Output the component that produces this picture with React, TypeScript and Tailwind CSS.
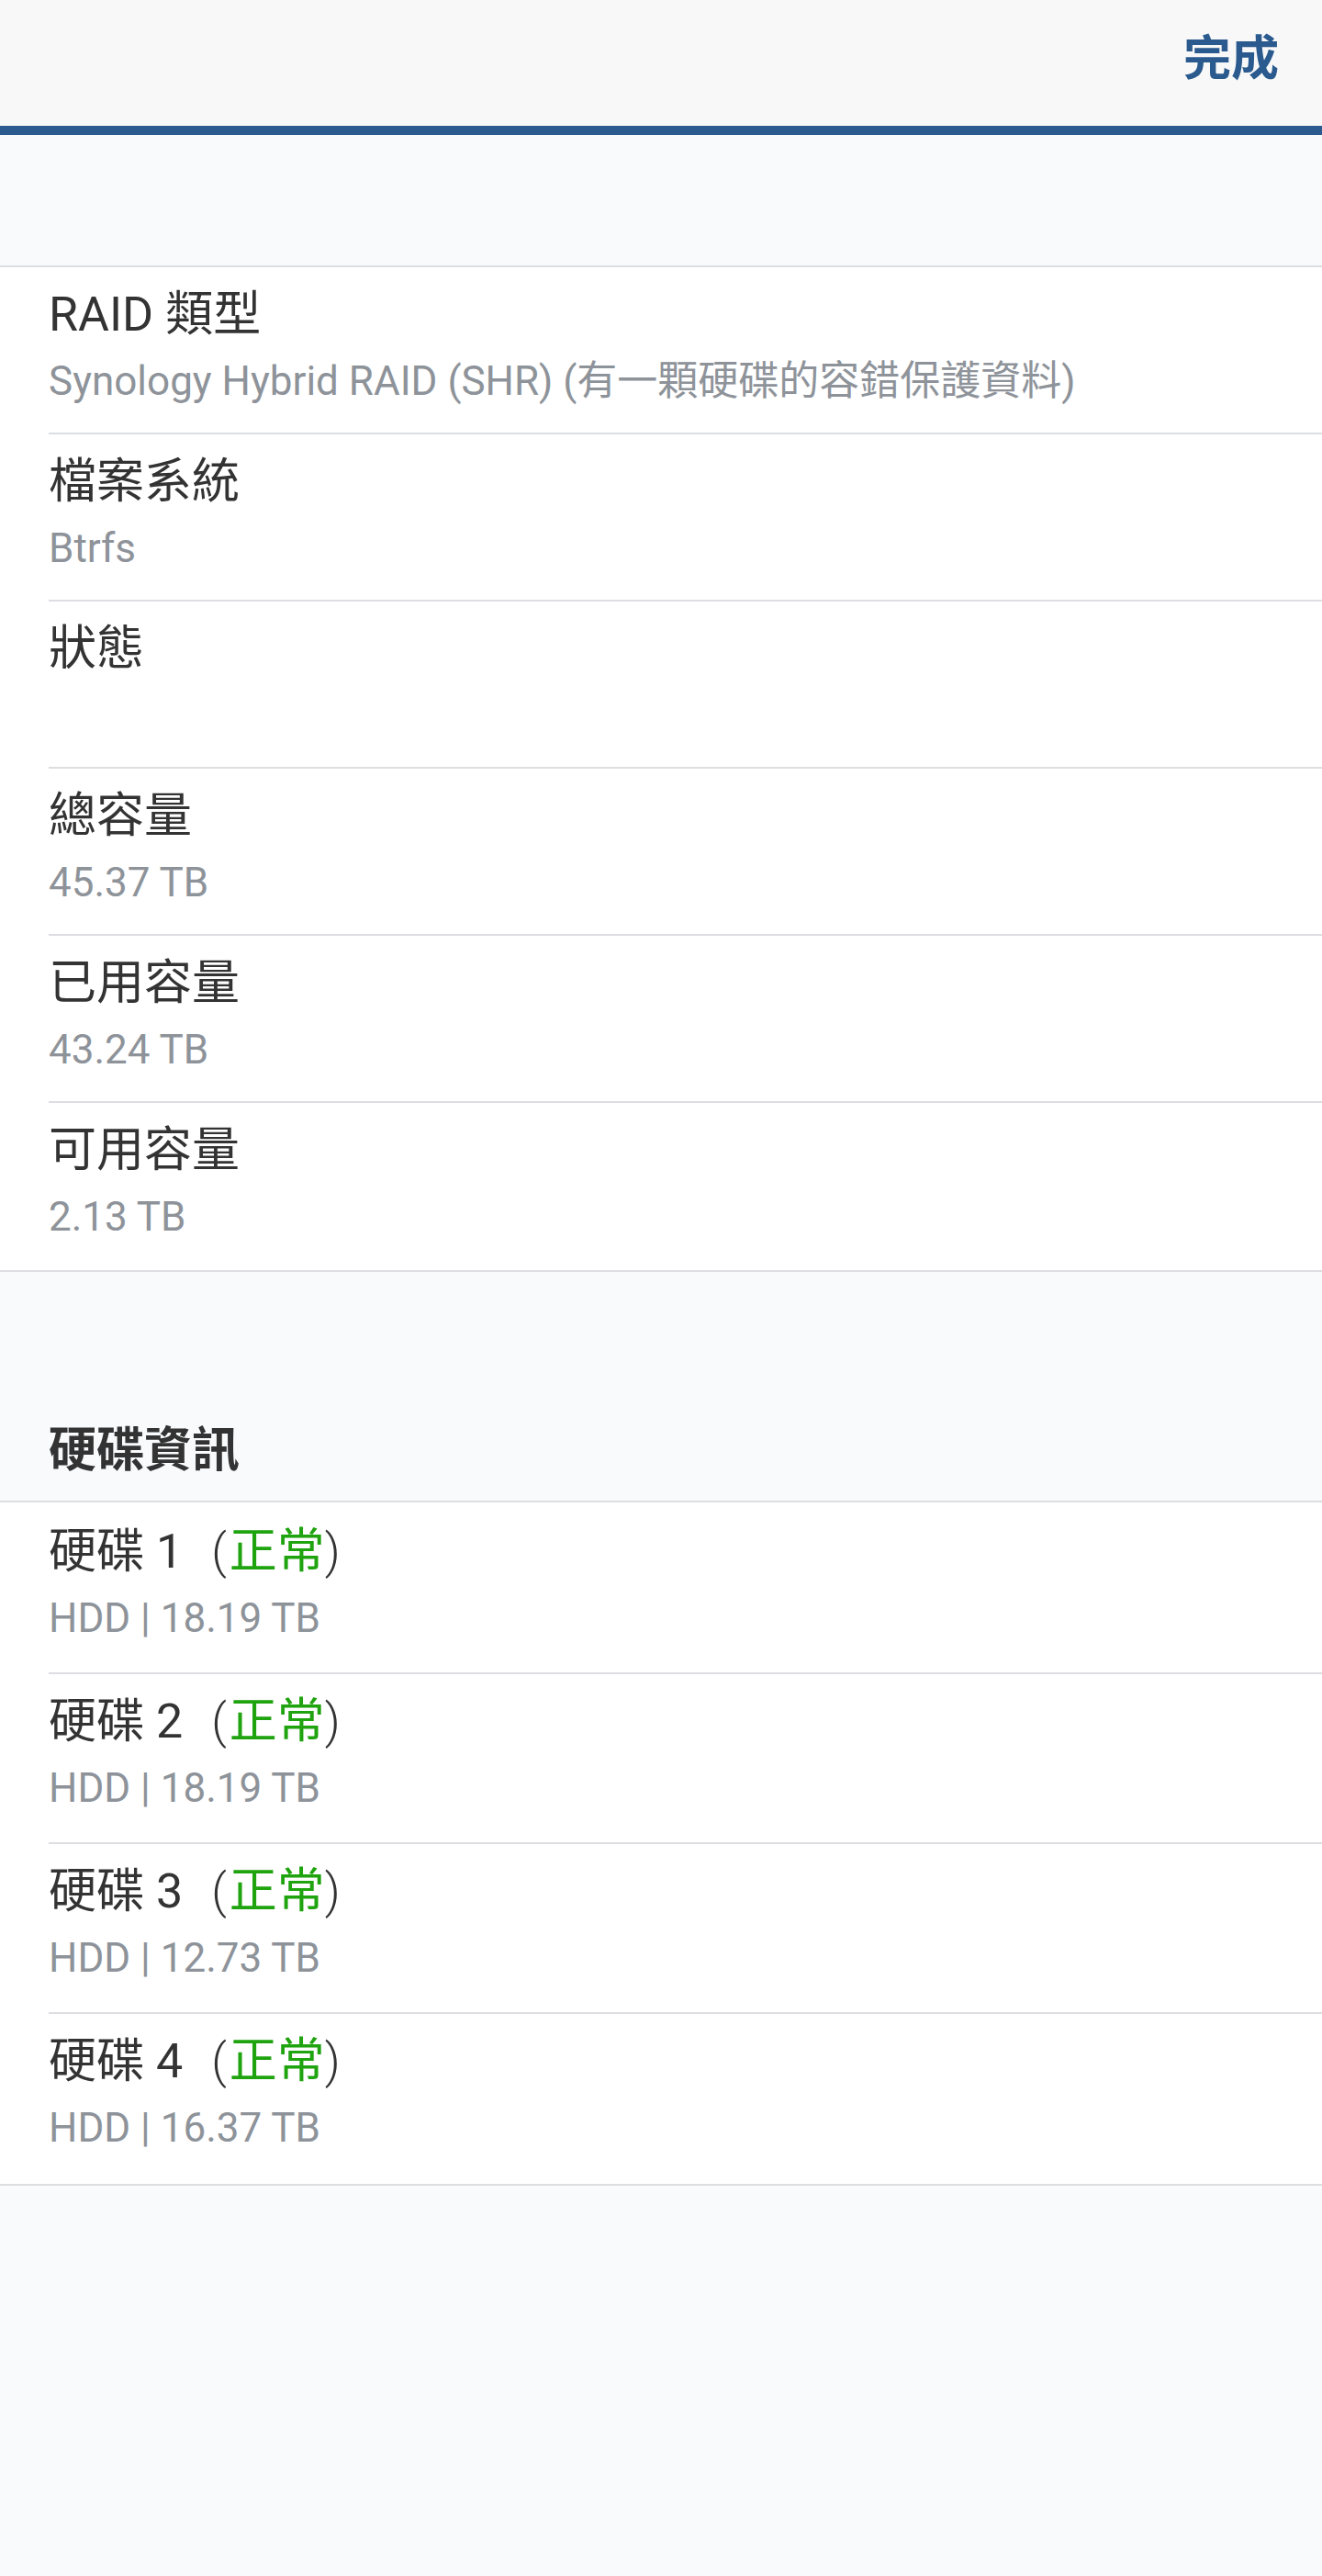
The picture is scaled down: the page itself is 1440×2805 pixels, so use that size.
const volumeInfo = [
  { label: 'RAID 類型', value: 'Synology Hybrid RAID (SHR) (有一顆硬碟的容錯保護資料)' },
  { label: '檔案系統', value: 'Btrfs' },
  { label: '狀態', value: '' },
  { label: '總容量', value: '45.37 TB' },
  { label: '已用容量', value: '43.24 TB' },
  { label: '可用容量', value: '2.13 TB' },
];

const disks = [
  { name: '硬碟 1', status: '正常', size: 'HDD | 18.19 TB' },
  { name: '硬碟 2', status: '正常', size: 'HDD | 18.19 TB' },
  { name: '硬碟 3', status: '正常', size: 'HDD | 12.73 TB' },
  { name: '硬碟 4', status: '正常', size: 'HDD | 16.37 TB' },
];

function InfoRow({
  title,
  subtitle,
  last,
  className,
}: {
  title: React.ReactNode;
  subtitle: string;
  last?: boolean;
  className: string;
}) {
  return (
    <div className="pl-[53px]">
      <div className={`${className} ${last ? '' : 'border-b-2 border-[#dcdee1]'}`}>
        <div className="h-[64px] leading-[64px] text-[52px] text-[#333333] whitespace-nowrap">
          {title}
        </div>
        <div className="mt-[14px] h-[52px] leading-[52px] text-[44px] text-[#8e939a] whitespace-nowrap">
          {subtitle}
        </div>
      </div>
    </div>
  );
}

export default function App() {
  return (
    <div className="min-h-[2805px] flex flex-col bg-[#f8fafc] font-['Roboto','Noto_Sans_CJK_TC',sans-serif]">
      {/* Top bar */}
      <div className="h-[137px] bg-[#f8f8f8] flex items-center justify-end pr-[47px] pb-[8px]">
        <button className="leading-[52px] text-[52px] font-bold text-[#2a5a8e]">完成</button>
      </div>
      <div className="h-[10px] bg-[#2a5a8e]" />

      <div className="h-[142px]" />

      {/* Volume info */}
      <div className="bg-white border-y-2 border-[#dcdee1]">
        {volumeInfo.map((item, i) => (
          <InfoRow
            key={item.label}
            className="h-[182px] pt-[20px]"
            title={item.label}
            subtitle={item.value}
            last={i === volumeInfo.length - 1}
          />
        ))}
      </div>

      {/* Disk info header */}
      <div className="h-[249px] flex items-end pl-[53px] pb-[22px]">
        <div className="leading-[64px] text-[52px] font-bold text-[#333333]">硬碟資訊</div>
      </div>

      <div className="bg-white border-y-2 border-[#dcdee1]">
        {disks.map((disk, i) => (
          <InfoRow
            key={disk.name}
            className={i === 0 ? 'h-[187px] pt-[22px]' : 'h-[185px] pt-[20px]'}
            last={i === disks.length - 1}
            title={
              <>
                {disk.name}
                <span className="ml-[31px] mr-[3px] font-light">(</span>
                <span className="text-[#1fa30f]">{disk.status}</span>
                <span className="font-light">)</span>
              </>
            }
            subtitle={disk.size}
          />
        ))}
      </div>

      <div className="flex-1" />
    </div>
  );
}
